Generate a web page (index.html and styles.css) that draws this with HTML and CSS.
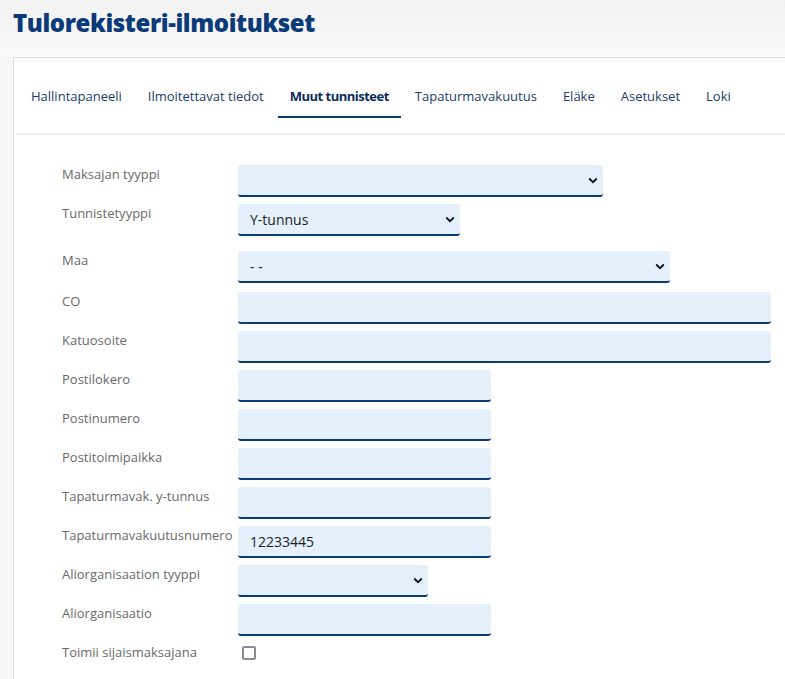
FILE: index.html
```html
<!DOCTYPE html>
<html lang="fi">
<head>
<meta charset="utf-8">
<title>Tulorekisteri-ilmoitukset</title>
<link rel="stylesheet" href="styles.css">
</head>
<body>
<header class="page-header">
  <h1 class="page-title">Tulorekisteri-ilmoitukset</h1>
</header>
<main class="panel">
  <nav class="tabs">
    <a class="tab">Hallintapaneeli</a>
    <a class="tab">Ilmoitettavat tiedot</a>
    <a class="tab tab-active">Muut tunnisteet</a>
    <a class="tab">Tapaturmavakuutus</a>
    <a class="tab">Eläke</a>
    <a class="tab">Asetukset</a>
    <a class="tab">Loki</a>
  </nav>
  <form class="form">
    <div class="row">
      <label class="label">Maksajan tyyppi</label>
      <select class="control select w-365"><option></option></select>
    </div>
    <div class="row row-gap-lg">
      <label class="label">Tunnistetyyppi</label>
      <select class="control select w-222"><option>Y-tunnus</option></select>
    </div>
    <div class="row row-gap-md">
      <label class="label">Maa</label>
      <select class="control select w-432"><option>- -</option></select>
    </div>
    <div class="row">
      <label class="label">CO</label>
      <input class="control w-533" type="text">
    </div>
    <div class="row">
      <label class="label">Katuosoite</label>
      <input class="control w-533" type="text">
    </div>
    <div class="row">
      <label class="label">Postilokero</label>
      <input class="control w-253" type="text">
    </div>
    <div class="row">
      <label class="label">Postinumero</label>
      <input class="control w-253" type="text">
    </div>
    <div class="row">
      <label class="label">Postitoimipaikka</label>
      <input class="control w-253" type="text">
    </div>
    <div class="row">
      <label class="label">Tapaturmavak. y-tunnus</label>
      <input class="control w-253" type="text">
    </div>
    <div class="row">
      <label class="label">Tapaturmavakuutusnumero</label>
      <input class="control w-253" type="text" value="12233445">
    </div>
    <div class="row">
      <label class="label">Aliorganisaation tyyppi</label>
      <select class="control select w-190"><option></option></select>
    </div>
    <div class="row">
      <label class="label">Aliorganisaatio</label>
      <input class="control w-253" type="text">
    </div>
    <div class="row">
      <label class="label">Toimii sijaismaksajana</label>
      <span class="checkbox"></span>
    </div>
  </form>
</main>
</body>
</html>
```

FILE: styles.css
```css
* { box-sizing: border-box; }

html, body {
  margin: 0;
  padding: 0;
}

body {
  background: #f8f8f8;
  font-family: "Open Sans", "Noto Sans", sans-serif;
  width: 785px;
  height: 679px;
  overflow: hidden;
}

.page-header {
  height: 57px;
  padding: 0 0 0 13px;
  background: linear-gradient(#f1f1f1, #fafafa);
}

.page-title {
  margin: 0;
  padding-top: 7px;
  font-size: 24px;
  line-height: 32px;
  font-weight: 800;
  color: #0b3a78;
  letter-spacing: -0.4px;
}

.panel {
  margin-left: 13px;
  background: #fff;
  border-left: 1px solid #dddddd;
  border-top: 1px solid #dddddd;
  height: 622px;
}

.tabs {
  display: flex;
  gap: 2px;
  margin-left: 2px;
  padding: 18px 0 15px 3px;
  border-bottom: 2px solid #efefef;
}

.tab {
  padding: 10px 12px 10px;
  border-bottom: 2px solid transparent;
  font-size: 13px;
  line-height: 20px;
  color: #1a3d6d;
  white-space: nowrap;
}

.tab-active {
  font-weight: 700;
  color: #0b2d5d;
  letter-spacing: -0.5px;
  border-bottom-color: #0b3a78;
}

.form {
  padding: 30px 0 0 48px;
}

.row {
  display: flex;
  align-items: flex-start;
  margin-bottom: 7px;
}

.row-gap-lg { margin-bottom: 15px; }
.row-gap-md { margin-bottom: 9px; }

.label {
  width: 176px;
  flex: none;
  font-size: 13px;
  line-height: 19px;
  color: #6a6a6a;
  white-space: nowrap;
}

.control {
  height: 32px;
  border: none;
  border-bottom: 2px solid #0b3a78;
  border-radius: 3px;
  background: #e4f0fc;
  padding: 0 12px;
  font-family: "Open Sans", "Noto Sans", sans-serif;
  font-size: 14px;
  color: #1d1d1d;
  outline: none;
}

.select {
  -webkit-appearance: none;
  appearance: none;
  background-image: url("data:image/svg+xml;utf8,<svg xmlns='http://www.w3.org/2000/svg' width='10' height='7' viewBox='0 0 10 7'><path d='M1.2 1.5 5 5.2 8.8 1.5' fill='none' stroke='%23111' stroke-width='1.8'/></svg>");
  background-repeat: no-repeat;
  background-position: right 5px center;
  background-size: 10px 7px;
}

.w-190 { width: 190px; }
.w-222 { width: 222px; }
.w-253 { width: 253px; }
.w-365 { width: 365px; }
.w-432 { width: 432px; }
.w-533 { width: 533px; }

.checkbox {
  display: block;
  width: 14px;
  height: 14px;
  margin: 3px 0 0 4px;
  border: 2px solid #8b8b98;
  border-radius: 2px;
  background: #fff;
}
```
